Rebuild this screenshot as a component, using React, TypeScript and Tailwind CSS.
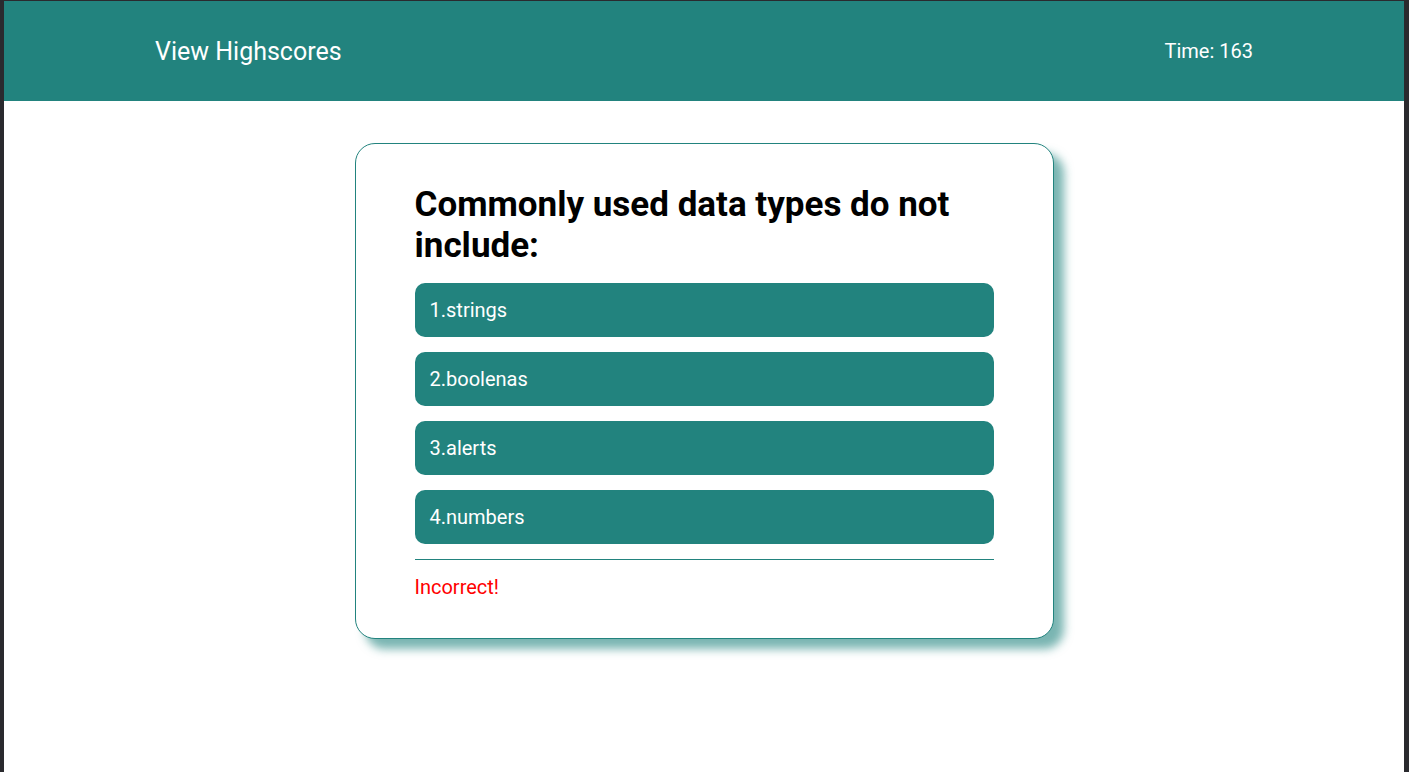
import React from "react";

export default function App() {
  const options = ["1.strings", "2.boolenas", "3.alerts", "4.numbers"];
  return (
    <div className="w-[1409px] h-[772px] bg-[#2a2a2e] pt-px pl-[4px] pr-[5px] overflow-hidden" style={{ fontFamily: "Roboto, 'Noto Sans', sans-serif" }}>
      <div className="h-[771px] bg-white">
        <header className="h-[100px] bg-[#22837e] flex items-center justify-between pl-[151px] pr-[151px] text-white">
          <span className="text-[25px] leading-[29px]">View Highscores</span>
          <span className="text-[20px] leading-[24px]">Time: 163</span>
        </header>
        <div className="flex justify-center pt-[42px]">
          <div className="w-[699px] border border-[#22837e] rounded-[20px] bg-white pt-[40px] pb-[39px] px-[59px] shadow-[10px_10px_10px_rgba(34,131,126,0.6)]">
            <h2 className="text-[35px] leading-[41px] font-bold text-black mb-[17px]">Commonly used data types do not include:</h2>
            <div className="flex flex-col gap-[15px]">
              {options.map((o) => (
                <button key={o} className="h-[54px] w-full rounded-[10px] bg-[#22837e] text-white text-[20px] text-left pl-[15px]">
                  {o}
                </button>
              ))}
            </div>
            <div className="mt-[15px] h-px bg-[#22837e]" />
            <div className="mt-[15px] text-[20px] leading-[24px] text-[#ff0000]">Incorrect!</div>
          </div>
        </div>
      </div>
    </div>
  );
}
